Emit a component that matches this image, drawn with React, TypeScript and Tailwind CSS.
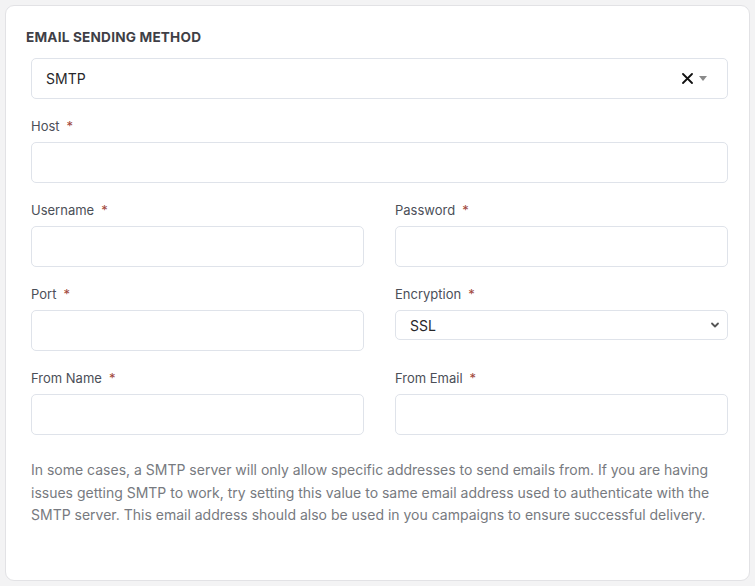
import React from "react";

const Label = ({ text }: { text: string }) => (
  <div className="h-4 flex items-center text-[13px] leading-4 text-[#4b4f58] pl-0">
    <span>{text}</span>
    <span className="ml-[7px] text-[#a0463a]">*</span>
  </div>
);

const Input = () => (
  <div className="h-[41px] rounded-[5px] border border-[#dfe3ea] bg-white" />
);

const Field = ({ label }: { label: string }) => (
  <div className="flex flex-col gap-2">
    <Label text={label} />
    <Input />
  </div>
);

export default function App() {
  return (
    <div
      className="w-[755px] h-[586px] bg-[#f3f3f4] pt-[5px] pl-[5px] pr-[5px] pb-[5px]"
      style={{ fontFamily: "Inter, 'Noto Sans', sans-serif" }}
    >
      <div className="h-[576px] w-[745px] rounded-[9px] border border-[#e2e2e5] bg-white pt-[21px] px-5">
        <div className="text-[13.6px] leading-5 font-bold text-[#3f3f46] tracking-[0.2px]">
          EMAIL SENDING METHOD
        </div>
        <div className="pl-[5px] pr-[1px]">
          <div className="mt-[11px] h-[41px] rounded-[5px] border border-[#dfe3ea] bg-white flex items-center pl-[14px] pr-[20px]">
            <span className="text-[14px] text-[#27272a] flex-1">SMTP</span>
            <svg width="11" height="11" viewBox="0 0 11 11" className="mr-[6px]">
              <path d="M1 1 L10 10 M10 1 L1 10" stroke="#111" strokeWidth="1.8" strokeLinecap="round" />
            </svg>
            <svg width="8" height="5" viewBox="0 0 8 5">
              <path d="M0 0 L8 0 L4 5 Z" fill="#8a8a8a" />
            </svg>
          </div>
          <div className="mt-[19px]">
            <Field label="Host" />
          </div>
          <div className="mt-[19px] grid grid-cols-2 gap-x-[31px] gap-y-[19px]">
            <Field label="Username" />
            <Field label="Password" />
            <Field label="Port" />
            <div className="flex flex-col gap-2">
              <Label text="Encryption" />
              <div className="h-[30px] rounded-[5px] border border-[#dfe3ea] bg-white flex items-center pl-[14px] pr-[7px]">
                <span className="text-[14px] text-[#27272a] flex-1">SSL</span>
                <svg width="10" height="10" viewBox="0 0 10 10">
                  <path d="M2 3.5 L5 6.5 L8 3.5" stroke="#555" strokeWidth="1.8" fill="none" strokeLinecap="round" strokeLinejoin="round" />
                </svg>
              </div>
            </div>
            <Field label="From Name" />
            <Field label="From Email" />
          </div>
          <p className="mt-6 text-[14px] leading-[22.5px] text-[#777a80]">
            In some cases, a SMTP server will only allow specific addresses to send emails from. If you are having issues getting SMTP to work, try setting this value to same email address used to authenticate with the SMTP server. This email address should also be used in you campaigns to ensure successful delivery.
          </p>
        </div>
      </div>
    </div>
  );
}
